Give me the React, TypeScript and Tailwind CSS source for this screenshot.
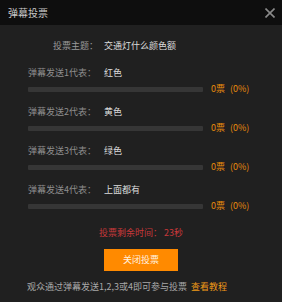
import React from 'react';

const font = { fontFamily: '"Noto Sans CJK SC", "Noto Sans", sans-serif' };

const options = [
  { label: '弹幕发送1代表：', value: '红色' },
  { label: '弹幕发送2代表：', value: '黄色' },
  { label: '弹幕发送3代表：', value: '绿色' },
  { label: '弹幕发送4代表：', value: '上面都有' },
];

export default function App() {
  return (
    <div className="w-[282px] h-[302px] flex flex-col bg-[#202020]" style={font}>
      {/* Header */}
      <div className="h-[25px] shrink-0 bg-[#0e0e0e] flex items-center justify-between pl-2 pr-[7px]">
        <span className="text-[10px] leading-[12px] text-[#c8c8c8]">弹幕投票</span>
        <svg width="10" height="10" viewBox="0 0 10 10" className="text-[#8a8a8a]">
          <path d="M0.5 0.5 L9.5 9.5 M9.5 0.5 L0.5 9.5" stroke="currentColor" strokeWidth="1.6" />
        </svg>
      </div>

      <div className="flex flex-col pt-[15px] text-[9px] leading-[12px]">
        {/* Subject */}
        <div className="flex items-center gap-[6px]">
          <span className="w-[98px] text-right text-[#9a9a9a]">投票主题：</span>
          <span className="text-[#dcdcdc]">交通灯什么颜色额</span>
        </div>

        <div className="flex flex-col gap-[11px] mt-[15px]">
          {options.map((o) => (
            <div key={o.label} className="flex flex-col gap-[4px]">
              <div className="flex items-center gap-[6px]">
                <span className="w-[98px] pr-[2px] text-right text-[#8e8e8e]">{o.label}</span>
                <span className="text-[#dcdcdc]">{o.value}</span>
              </div>
              <div className="flex items-center h-[12px] pl-[28px] gap-[8px]">
                <div className="w-[175px] h-[5px] bg-[#363636] rounded-[1px]" />
                <span className="text-[#e88a0c]">
                  0票<span className="ml-[5px]">(0%)</span>
                </span>
              </div>
            </div>
          ))}
        </div>

        {/* Timer */}
        <div className="mt-[15px] text-center text-[#c8383a]">投票剩余时间： 23秒</div>

        <div className="mt-[10px] flex justify-center">
          <button className="w-[74px] h-[22px] bg-[#ff8a00] text-[#fff3e0] text-[9px]" style={font}>
            关闭投票
          </button>
        </div>

        <div className="mt-[10px] pl-[27px] text-[#a8a8a8] whitespace-nowrap">
          观众通过弹幕发送1,2,3或4即可参与投票
          <span className="ml-[4px] text-[#f09a18]">查看教程</span>
        </div>
      </div>
    </div>
  );
}
